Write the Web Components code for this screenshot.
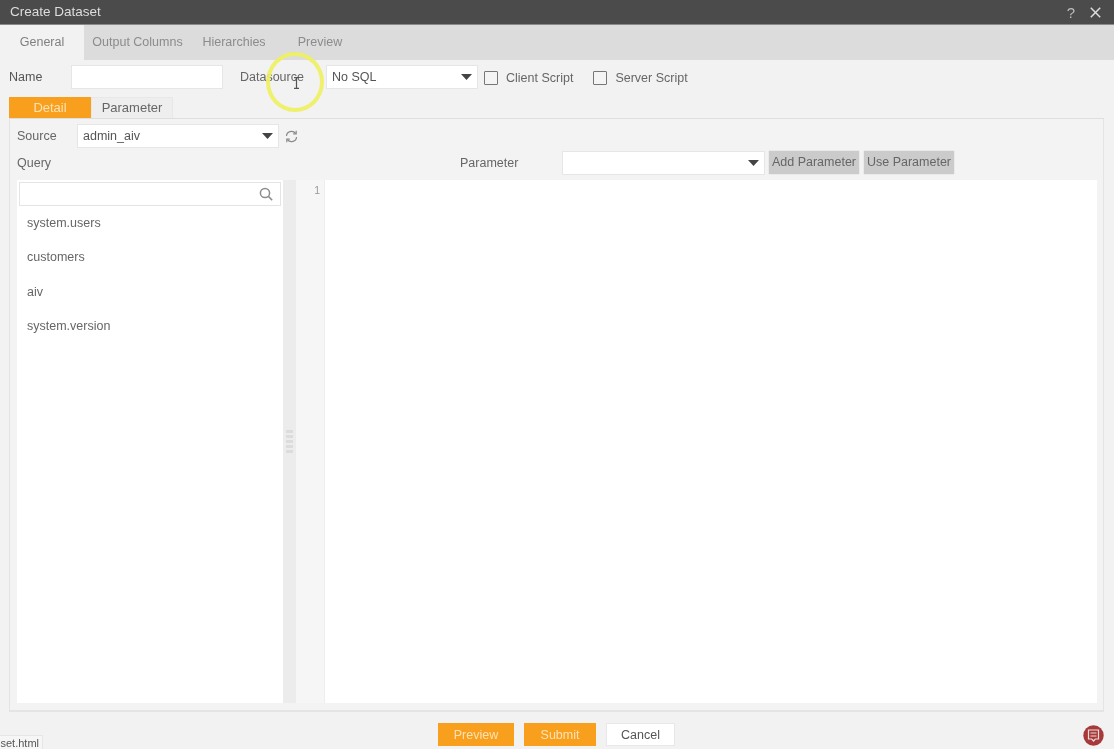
<!DOCTYPE html>
<html lang="en"><head><meta charset="utf-8"><title>Create Dataset</title>
<style>
html,body{margin:0;padding:0;height:100%;overflow:hidden;background:#f2f2f2}
body{font:12.5px "Liberation Sans",Arial,sans-serif;color:#666}
</style></head><body>
<ds-dialog>
  <ds-titlebar slot="title">Create Dataset</ds-titlebar>
  <ds-tabs slot="tabs"><span class="on">General</span><span style="width:107px">Output Columns</span><span style="width:78px;margin-left:4px">Hierarchies</span><span style="width:78px;margin-left:8px">Preview</span></ds-tabs>
  <ds-general-row slot="general"></ds-general-row>
  <ds-subtabs slot="subtabs"></ds-subtabs>
  <ds-detail-panel slot="panel"></ds-detail-panel>
  <ds-footer slot="footer"></ds-footer>
</ds-dialog>
<script>
function el(name, css, html, setup){
  customElements.define(name, class extends HTMLElement{
    constructor(){super();this.attachShadow({mode:'open'}).innerHTML='<style>'+css+'</style>'+html;}
  });
}
const caret='<svg width="11" height="6" viewBox="0 0 11 6"><path d="M0 0h11L5.5 6z" fill="#444"/></svg>';

el('ds-select',`:host{display:flex;box-sizing:border-box;height:24px;align-items:center;justify-content:space-between;background:#fff;border:1px solid #e6e6e6;padding:0 5px 0 5px;font-size:12.5px;color:#555}`,
`<span><slot></slot></span>${caret}`);

el('ds-checkbox',`:host{display:inline-flex;align-items:center;gap:8px;color:#666;font-size:12.5px}
i{display:block;box-sizing:border-box;width:14px;height:14px;border:1.5px solid #777;background:#f4f4f4;border-radius:1px}`,`<i></i><span><slot></slot></span>`);

el('ds-button',`:host{display:inline-flex;box-sizing:border-box;height:23px;align-items:center;justify-content:center;font-size:12.5px;white-space:nowrap}
:host([kind=gray]){background:#cbcbcb;color:#666;box-shadow:0 0 1px #bbb}
:host([kind=orange]){background:#f99f1e;color:#fde2b3}
:host([kind=plain]){background:#fff;color:#555;border:1px solid #e8e8e8}`,`<slot></slot>`);

el('ds-titlebar',`:host{display:flex;align-items:center;justify-content:space-between;height:25px;box-sizing:border-box;background:#4b4b4b;border-bottom:1px solid #8a8a8a;padding:0 13px 0 10px;color:#ddd;font-size:13.5px}
div{display:flex;align-items:center;gap:15px;margin-top:2px}
span{font-size:15px;color:#bbb;line-height:1}`,
`<slot></slot><div><span>?</span><svg width="11" height="11" viewBox="0 0 11 11"><path d="M.8.8l9.4 9.4M10.2.8L.8 10.2" stroke="#ddd" stroke-width="1.5" fill="none"/></svg></div>`);

el('ds-tabs',`:host{display:flex;height:35px;background:#dcdcdc;color:#8c8c8c;font-size:12.5px}
::slotted(span){display:flex;align-items:center;justify-content:center;padding-bottom:1px;box-sizing:border-box}
::slotted(.on){width:84px;background:#f2f2f2;color:#808080}`,`<slot></slot>`);

el('ds-general-row',`:host{display:flex;align-items:center;height:37px;box-sizing:border-box;padding:5px 0 8px 9px;color:#555}
.in{width:152px;height:24px;box-sizing:border-box;background:#fff;border:1px solid #e6e6e6}
.n{width:62px}.d{width:86px;margin-left:17px;color:#666}
ds-select{width:152px}
ds-checkbox{margin-left:6px}
ds-checkbox+ds-checkbox{margin-left:20px}
.ring{position:absolute;left:266px;top:52px;width:58px;height:60px;box-sizing:border-box;border:4px solid #eef05c;border-radius:50%;opacity:.9}
.cur{position:absolute;left:293px;top:77px}`,
`<span class="n">Name</span><div class="in"></div><span class="d">Datasource</span><ds-select>No SQL</ds-select><ds-checkbox style="margin-top:3px">Client Script</ds-checkbox><ds-checkbox style="margin-top:3px">Server Script</ds-checkbox>
<div class="ring"></div>
<svg class="cur" width="7" height="12" viewBox="0 0 7 12"><path d="M1 .7h5M1 11.3h5M3.5 .7v10.6" stroke="#555" stroke-width="1.2" fill="none"/></svg>`);

el('ds-subtabs',`:host{display:flex;height:22px;margin:0 10px 0 9px;box-sizing:border-box;border-bottom:1px solid #dedede;font-size:13px}
span{display:flex;align-items:center;justify-content:center;width:82px;height:21px}
.a{background:#f99f1e;color:#fde2b3}
.b{background:#eeeeee;color:#666;border:1px solid #e8e8e8;border-bottom:0;box-sizing:border-box}`,
`<span class="a">Detail</span><span class="b">Parameter</span>`);

el('ds-detail-panel',`:host{display:flex;flex-direction:column;box-sizing:border-box;height:594px;margin:0 10px 0 9px;padding:5px 6px 7px 7px;border:solid #e4e4e4;border-width:0 1px 2px 1px;background:#f3f3f3;color:#666}
.r1{display:flex;align-items:center;height:24px}
.r1 span{width:60px}
.r1 ds-select{width:202px}
.r1 svg{margin-left:6px;margin-top:2px}
.r2{display:flex;align-items:center;height:24px;margin-top:3px}
.r2 .q{width:443px}.r2 .p{width:102px}
.r2 ds-select{width:203px}
.r2 ds-button{margin-left:4px;margin-top:-1px}
.main{display:flex;flex:1;margin-top:5px;min-height:0}
.list{width:266px;background:#fff;box-sizing:border-box;padding:2px 2px 0 2px;display:flex;flex-direction:column}
.search{display:flex;align-items:center;justify-content:flex-end;box-sizing:border-box;height:24px;width:262px;border:1px solid #e4e4e4;background:#fff;padding-right:7px}
.items{padding:0 8px;color:#666}
.items div{height:34.3px;display:flex;align-items:center;position:relative;top:0}
.split{width:13px;background:#ececec;display:flex;flex-direction:column;align-items:center;justify-content:center;gap:2px}
.split i{display:block;width:7px;height:3px;background:#dcdcdc}
.gut{width:29px;box-sizing:border-box;background:#f6f6f6;color:#999;font-size:10.5px;text-align:right;padding:4px 4px 0 0;border-right:1px solid #eee}
.ed{flex:1;background:#fff}`,
`<div class="r1"><span>Source</span><ds-select>admin_aiv</ds-select><svg width="13" height="13" viewBox="0 0 13 13" fill="none" stroke="#8a8a8a" stroke-width="1.2"><path d="M1.5 6A5 4.6 0 0 1 10.6 3.4"/><path d="M11.5 7A5 4.6 0 0 1 2.4 9.6"/><path d="M11.2 .8v3H8.2M1.8 12.2v-3h3"/></svg></div>
<div class="r2"><span class="q">Query</span><span class="p">Parameter</span><ds-select></ds-select><ds-button kind="gray" style="width:90px">Add Parameter</ds-button><ds-button kind="gray" style="width:90px;margin-left:5px">Use Parameter</ds-button></div>
<div class="main"><div class="list"><div class="search"><svg width="14" height="14" viewBox="0 0 14 14" fill="none" stroke="#8c8c8c" stroke-width="1.5"><circle cx="6" cy="6" r="4.6"/><path d="M9.4 9.4l3.8 3.8"/></svg></div>
<div class="items"><div>system.users</div><div>customers</div><div>aiv</div><div>system.version</div></div></div>
<div class="split"><i></i><i></i><i></i><i></i><i></i></div><div class="gut">1</div><div class="ed"></div></div>`);

el('ds-footer',`:host{display:flex;justify-content:center;position:relative;height:37px;box-sizing:border-box;padding-top:11px;gap:10px}
.tip{position:absolute;left:0;bottom:0;width:43px;height:14px;box-sizing:border-box;background:#f6f6f6;border:1px solid #e6e6e6;border-width:1px 1px 0 0;font-size:11px;line-height:14px;color:#555;overflow:hidden;white-space:nowrap;direction:rtl;padding-right:3px}
.chat{position:absolute;left:1083px;top:13px}`,
`<ds-button kind="orange" style="width:76px;margin-left:-1px">Preview</ds-button><ds-button kind="orange" style="width:72px">Submit</ds-button><ds-button kind="plain" style="width:69px">Cancel</ds-button>
<div class="tip"><bdi>set.html</bdi></div>
<svg class="chat" width="21" height="21" viewBox="0 0 21 21"><circle cx="10.5" cy="10.5" r="10.2" fill="#a63a3a"/><path d="M5.5 5h10v9h-3.2l-1.8 2-1.8-2H5.500z" fill="none" stroke="#f2dcdc" stroke-width="1.2"/><path d="M7.500 8h6M7.500 11h6" stroke="#f2dcdc" stroke-width="1.100"/></svg>`);

el('ds-dialog',`:host{display:flex;flex-direction:column;width:1114px;height:749px;overflow:hidden;position:relative;background:#f2f2f2;filter:blur(.35px)}`,
`<slot name="title"></slot><slot name="tabs"></slot><slot name="general"></slot><slot name="subtabs"></slot><slot name="panel"></slot><slot name="footer"></slot>`);
</script>
</body></html>
